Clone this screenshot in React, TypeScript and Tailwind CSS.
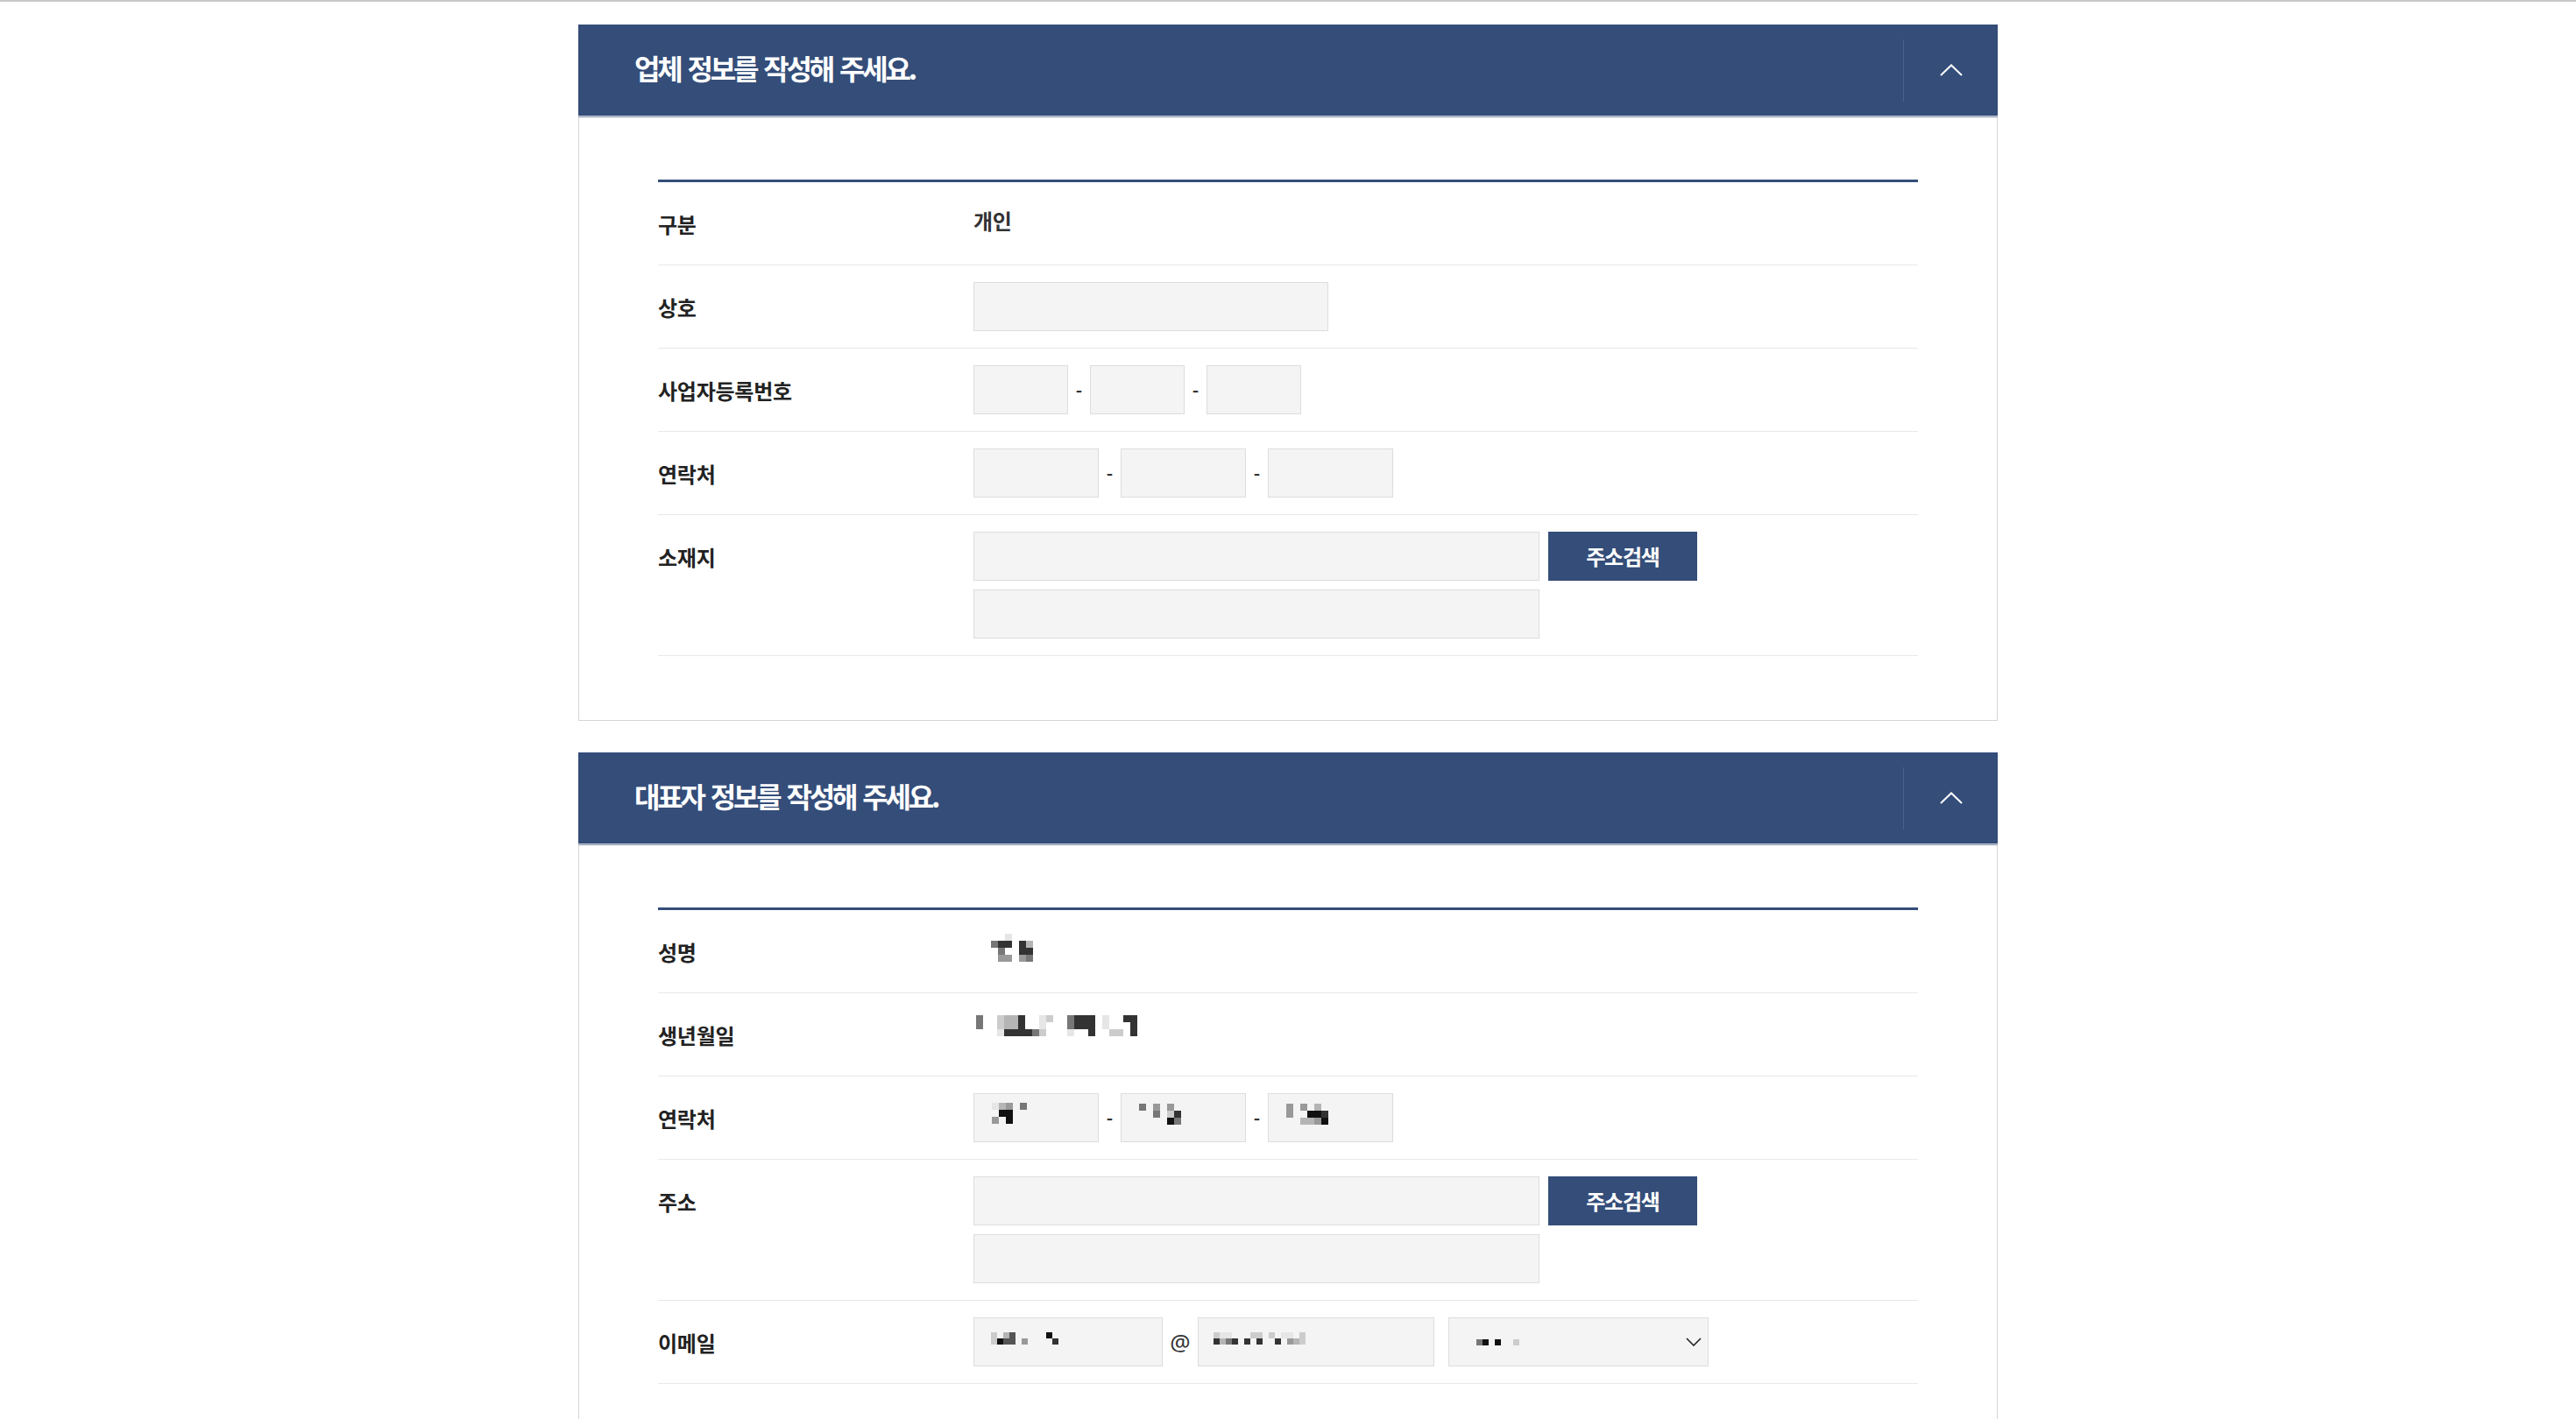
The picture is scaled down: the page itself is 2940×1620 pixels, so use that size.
import React from 'react';

const shade: Record<string, string> = {
  a: 'bg-[#111111]',
  b: 'bg-[#333333]',
  c: 'bg-[#555555]',
  d: 'bg-[#777777]',
  e: 'bg-[#999999]',
  f: 'bg-[#b5b5b5]',
  g: 'bg-[#cccccc]',
  h: 'bg-[#e6e6e6]',
  '.': 'bg-transparent',
};

// 가려진 개인정보(모자이크)
function Mosaic({ rows, small = false }: { rows: string[]; small?: boolean }) {
  const cell = small ? 'w-[7px] h-[7px]' : 'w-[8px] h-[8px]';
  return (
    <div className="flex flex-col">
      {rows.map((r, i) => (
        <div key={i} className="flex">
          {r.split('').map((c, j) => (
            <span key={j} className={`${cell} ${shade[c] ?? 'bg-transparent'}`} />
          ))}
        </div>
      ))}
    </div>
  );
}

function Field({
  w,
  children,
  className = '',
}: {
  w: string;
  children?: React.ReactNode;
  className?: string;
}) {
  return (
    <div className={`${w} h-[56px] bg-[#f4f4f4] border border-[#dddddd] ${className}`}>{children}</div>
  );
}

function Dash() {
  return (
    <span className="w-[25px] text-center text-[20px] font-bold text-[#333333] leading-none">-</span>
  );
}

function Row({ label, children }: { label: string; children: React.ReactNode }) {
  return (
    <div className="flex border-b border-[#e8e8e8] py-[19px]">
      <div className="w-[360px] h-[56px] flex items-center pt-[1px] text-[24px] font-bold tracking-[-0.01em] text-[#222222]">
        {label}
      </div>
      <div className="flex-1">{children}</div>
    </div>
  );
}

function SearchButton() {
  return (
    <button className="ml-[10px] w-[170px] h-[56px] bg-[#344d79] text-white text-[24px] font-bold tracking-[-0.05em]">
      주소검색
    </button>
  );
}

function Section({
  title,
  className = '',
  children,
}: {
  title: string;
  className?: string;
  children: React.ReactNode;
}) {
  return (
    <section className={`w-[1620px] mx-auto ${className}`}>
      <div className="flex items-center h-[104px] bg-[#344d79]">
        <h2 className="flex-1 pl-[64px] pb-[6px] text-[32px] font-bold text-white tracking-[-0.1em] [word-spacing:4px]">
          {title}
        </h2>
        <div className="w-px h-[71px] bg-[#4b6190]" />
        <button className="w-[107px] h-full flex items-center justify-center">
          <svg width="26" height="14" viewBox="0 0 26 14" fill="none">
            <polyline points="1,13 13,1.5 25,13" stroke="#ffffff" strokeWidth="2" />
          </svg>
        </button>
      </div>
      <div className="h-px bg-[#cfd5df]" />
      <div className="h-px bg-[#8795ae]" />
      <div className="border-x border-b border-[#d6d6d6] px-[90px] pt-[71px] pb-[73px]">
        <div className="border-t-[3px] border-[#344d79]">{children}</div>
      </div>
    </section>
  );
}

export default function App() {
  return (
    <div
      className="min-h-screen bg-white border-t-2 border-[#c8c8c8] pt-[26px] pb-[40px]"
      style={{ fontFamily: '"Noto Sans CJK KR", "Noto Sans", sans-serif' }}
    >
      {/* 업체 정보 */}
      <Section title="업체 정보를 작성해 주세요.">
        <Row label="구분">
          <div className="h-[56px] flex items-center pb-[6px] text-[24px] font-bold tracking-[-0.01em] text-[#333333]">
            개인
          </div>
        </Row>
        <Row label="상호">
          <Field w="w-[405px]" />
        </Row>
        <Row label="사업자등록번호">
          <div className="flex items-center">
            <Field w="w-[108px]" />
            <Dash />
            <Field w="w-[108px]" />
            <Dash />
            <Field w="w-[108px]" />
          </div>
        </Row>
        <Row label="연락처">
          <div className="flex items-center">
            <Field w="w-[143px]" />
            <Dash />
            <Field w="w-[143px]" />
            <Dash />
            <Field w="w-[143px]" />
          </div>
        </Row>
        <Row label="소재지">
          <div className="flex flex-col gap-[10px]">
            <div className="flex">
              <Field w="w-[646px]" />
              <SearchButton />
            </div>
            <Field w="w-[646px]" />
          </div>
        </Row>
      </Section>

      {/* 대표자 정보 */}
      <Section title="대표자 정보를 작성해 주세요." className="mt-[36px]">
        <Row label="성명">
          <div className="h-[56px] pl-[20px] pt-[8px]">
            <Mosaic rows={['..h...', 'dbb.bf', '.d..bb', '.ee.ed']} />
          </div>
        </Row>
        <Row label="생년월일">
          <div className="h-[56px] pl-[3px] pt-[6px]">
            <Mosaic
              rows={[
                'd..gffb..hg..dbbb.h..bb',
                'd..gffb..h...dbbb.h...b',
                '...hbbbbdg...h..b..gg.b',
              ]}
            />
          </div>
        </Row>
        <Row label="연락처">
          <div className="flex items-center">
            <Field w="w-[143px]" className="pl-[20px] pt-[10px]">
              <Mosaic rows={['hfe.d', '.aa..', 'e.a..']} />
            </Field>
            <Dash />
            <Field w="w-[143px]" className="pl-[20px] pt-[11px]">
              <Mosaic rows={['d.e.e.', '..d.gb', '....ad']} />
            </Field>
            <Dash />
            <Field w="w-[143px]" className="pl-[20px] pt-[11px]">
              <Mosaic rows={['e.e.f.', 'e..aab', '..ffea']} />
            </Field>
          </div>
        </Row>
        <Row label="주소">
          <div className="flex flex-col gap-[10px]">
            <div className="flex">
              <Field w="w-[646px]" />
              <SearchButton />
            </div>
            <Field w="w-[646px]" />
          </div>
        </Row>
        <Row label="이메일">
          <div className="flex items-center">
            <Field w="w-[216px]" className="pl-[19px] pt-[16px]">
              <Mosaic small rows={['g.fc.....a.', 'gacc.e....b']} />
            </Field>
            <span
              className="w-[40px] text-center text-[26px] text-[#333333] leading-none"
              style={{ fontFamily: '"Noto Sans", sans-serif' }}
            >
              @
            </span>
            <Field w="w-[270px]" className="pl-[17px] pt-[16px]">
              <Mosaic small rows={['ghh...gg.g.hh.g', 'bfdb.b.b..b.efg']} />
            </Field>
            <Field
              w="w-[297px]"
              className="ml-[16px] flex items-center justify-between pl-[31px] pr-[7px]"
            >
              <Mosaic small rows={['da.a..g']} />
              <svg width="18" height="10" viewBox="0 0 18 10" fill="none">
                <polyline points="1,1 9,9 17,1" stroke="#222222" strokeWidth="1.6" />
              </svg>
            </Field>
          </div>
        </Row>
      </Section>
    </div>
  );
}
